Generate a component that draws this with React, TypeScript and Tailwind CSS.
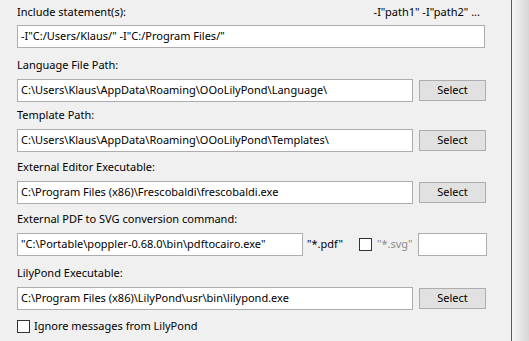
const font = { fontFamily: '"Noto Sans", "Segoe UI", sans-serif' };

function TextBox({ value, className }: { value: string; className?: string }) {
  return (
    <div
      className={`h-[23px] shrink-0 border border-[#adadad] bg-white pl-[3px] flex items-center text-[11px] text-black whitespace-nowrap overflow-hidden ${className ?? ''}`}
    >
      {value}
    </div>
  );
}

function SelectButton() {
  return (
    <button className="ml-[6px] mt-[1px] h-[21px] w-[67px] border border-[#adadad] bg-[#e1e1e1] text-[11px] text-black flex items-center justify-center">
      Select
    </button>
  );
}

function Label({ children, className }: { children: React.ReactNode; className?: string }) {
  return <div className={`h-[16px] leading-[16px] text-[11px] text-black ${className ?? ''}`}>{children}</div>;
}

function PathRow({ label, value, top }: { label: string; value: string; top: string }) {
  return (
    <div className={top}>
      <Label>{label}</Label>
      <div className="mt-[6px] flex items-start">
        <TextBox value={value} className="w-[396px]" />
        <SelectButton />
      </div>
    </div>
  );
}

export default function App() {
  return (
    <div className="flex h-[341px] w-[529px] overflow-hidden" style={font}>
      <div className="w-[511px] shrink-0 bg-[#f0f0f0] pl-[17px] pt-[4px]">
        <div className="flex w-[463px] justify-between">
          <Label>Include statement(s):</Label>
          <Label>-I"path1" -I"path2" ...</Label>
        </div>
        <TextBox value={'-I"C:/Users/Klaus/" -I"C:/Program Files/"'} className="mt-[5px] w-[468px]" />

        <PathRow
          top="mt-[9px]"
          label="Language File Path:"
          value="C:\Users\Klaus\AppData\Roaming\OOoLilyPond\Language\"
        />
        <PathRow
          top="mt-[5px]"
          label="Template Path:"
          value="C:\Users\Klaus\AppData\Roaming\OOoLilyPond\Templates\"
        />
        <PathRow
          top="mt-[7px]"
          label="External Editor Executable:"
          value="C:\Program Files (x86)\Frescobaldi\frescobaldi.exe"
        />

        <div className="mt-[7px]">
          <Label>External PDF to SVG conversion command:</Label>
          <div className="mt-[6px] flex items-center">
            <TextBox value={'"C:\\Portable\\poppler-0.68.0\\bin\\pdftocairo.exe"'} className="w-[286px]" />
            <span className="ml-[4px] w-[52px] shrink-0 text-[11px] text-black">"*.pdf"</span>
            <span className="h-[13px] w-[13px] shrink-0 border border-[#333333] bg-white" />
            <span className="ml-[5px] w-[41px] shrink-0 text-[11px] text-[#8c8c8c]">"*.svg"</span>
            <TextBox value="" className="w-[69px]" />
          </div>
        </div>

        <PathRow
          top="mt-[9px]"
          label="LilyPond Executable:"
          value="C:\Program Files (x86)\LilyPond\usr\bin\lilypond.exe"
        />

        <div className="mt-[8px] flex items-center">
          <span className="h-[13px] w-[13px] border border-[#333333] bg-white" />
          <span className="ml-[4px] text-[11px] text-black">Ignore messages from LilyPond</span>
        </div>
      </div>
      <div className="w-px shrink-0 bg-[#c02468]" />
      <div className="flex-1 bg-gradient-to-r from-[#f6f6f6] to-[#d6d6d6]" />
    </div>
  );
}
